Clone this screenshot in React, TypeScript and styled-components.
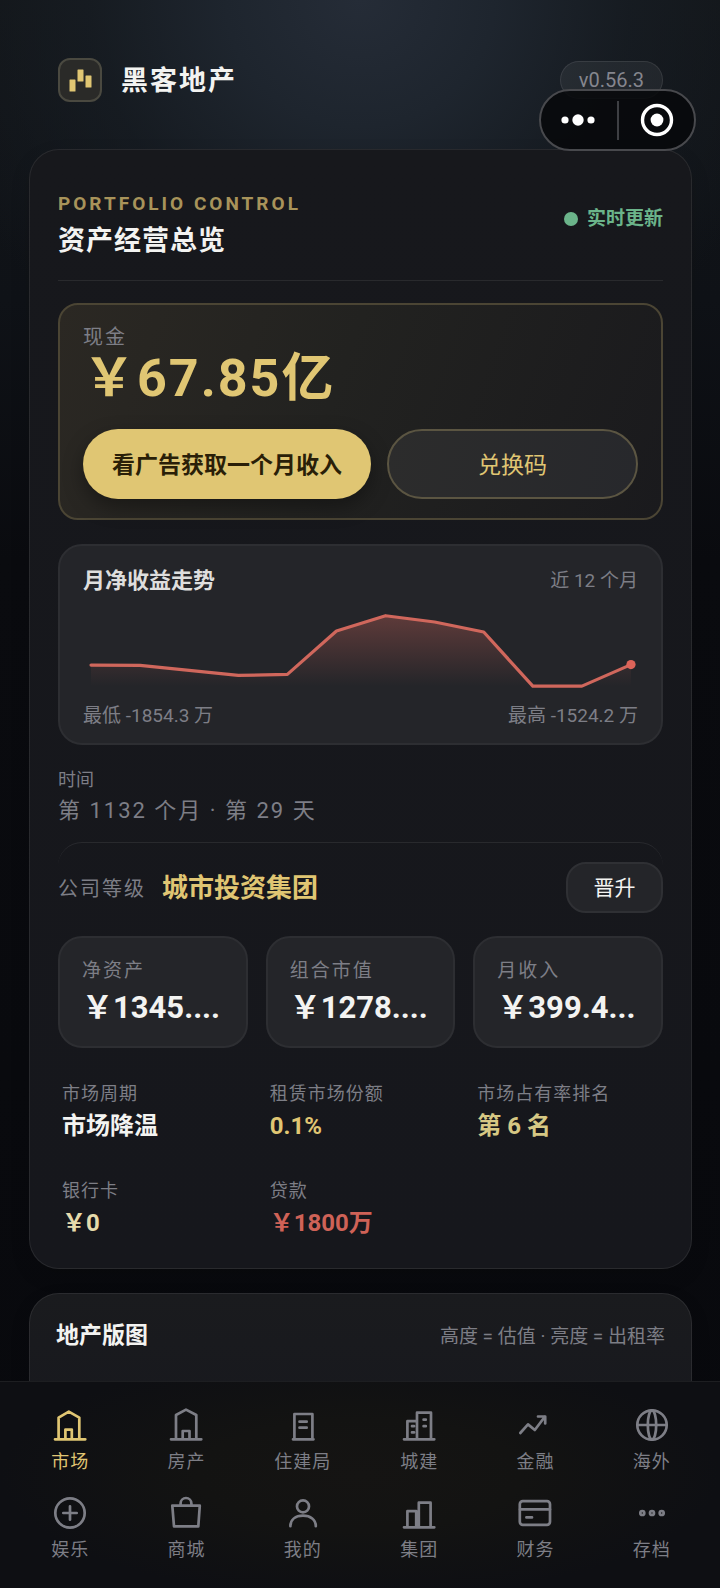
import React from 'react';
import styled, { createGlobalStyle, css } from 'styled-components';

const gold = '#e0c673';
const muted = '#7d7e86';
const line = 'rgba(255, 255, 255, 0.08)';

const GlobalStyle = createGlobalStyle`
  *, *::before, *::after { box-sizing: border-box; }
  body {
    margin: 0;
    background: #08090c;
    color: #f3f3f1;
    font-family: Roboto, "Noto Sans CJK SC", sans-serif;
    -webkit-font-smoothing: antialiased;
  }
  h1, h2, h3, p, dl, dt, dd, ul { margin: 0; padding: 0; }
  ul { list-style: none; }
  button { font-family: inherit; cursor: pointer; }
`;

const Shell = styled.div`
  position: relative;
  display: flex;
  flex-direction: column;
  height: 100vh;
  background:
    radial-gradient(ellipse 62% 420px at 50% 0, #252c37 0%, #1e252e 30%, rgba(24, 30, 37, 0.7) 60%, rgba(16, 19, 24, 0) 100%),
    linear-gradient(180deg, #121518 0, #0f1217 300px, #0a0b0f 560px, #08090d 100%);
`;

const Content = styled.main`
  flex: 1;
  min-height: 0;
  overflow-y: auto;
  scrollbar-width: none;
  padding: 0 28px 0 29px;
`;

const Header = styled.header`
  display: flex;
  align-items: center;
  padding: 58px 29px 47px;
`;

const Logo = styled.span`
  display: grid;
  place-items: center;
  width: 44px;
  height: 44px;
  border: 2px solid #4a4940;
  border-radius: 12px;
  background: #2a2a28;
`;

const Brand = styled.h1`
  margin-left: 19px;
  padding-top: 2px;
  font-size: 27px;
  line-height: 40px;
  font-weight: 700;
  letter-spacing: 2px;
`;

const Version = styled.span`
  margin-left: auto;
  padding: 0 18px;
  border: 1px solid rgba(255, 255, 255, 0.09);
  border-radius: 19px;
  background: rgba(255, 255, 255, 0.06);
  color: #85868e;
  font-size: 20px;
  line-height: 36px;
`;

const Capsule = styled.div`
  position: absolute;
  top: 89px;
  right: 24px;
  display: flex;
  align-items: center;
  width: 157px;
  height: 62px;
  border: 2px solid #48494d;
  border-radius: 31px;
  background: rgba(7, 8, 11, 0.86);
`;

const CapsuleButton = styled.button`
  flex: 1;
  display: grid;
  place-items: center;
  height: 100%;
  padding: 0;
  border: 0;
  background: none;
`;

const CapsuleDivider = styled.span`
  width: 2px;
  height: 39px;
  margin: 0 2px;
  background: #3e3f43;
`;

const Card = styled.section`
  border: 1px solid ${line};
  border-radius: 30px;
  background: linear-gradient(180deg, #17181c, #16171c);
  box-shadow: 0 8px 20px rgba(0, 0, 0, 0.12);
`;

const OverviewCard = styled(Card)`
  padding: 28px 28px 26px;
`;

const OverviewHead = styled.div`
  display: flex;
  justify-content: space-between;
  align-items: center;
  padding-bottom: 20px;
  border-bottom: 1px solid ${line};
`;

const Eyebrow = styled.p`
  margin-top: 14px;
  color: #a8935a;
  font-size: 19px;
  line-height: 24px;
  font-weight: 700;
  letter-spacing: 3px;
`;

const OverviewTitle = styled.h2`
  margin-top: 6px;
  font-size: 27px;
  line-height: 38px;
  font-weight: 700;
  letter-spacing: 1px;
`;

const Live = styled.span`
  display: flex;
  align-items: center;
  gap: 9px;
  color: #6bb48a;
  font-size: 19px;
  line-height: 28px;
  font-weight: 700;
  &::before {
    content: '';
    width: 14px;
    height: 14px;
    border-radius: 50%;
    background: currentColor;
  }
`;

const CashCard = styled.div`
  margin-top: 22px;
  padding: 20px 23px 19px;
  border: 2px solid #4b4534;
  border-radius: 20px;
  background: linear-gradient(110deg, #2b2823 0%, #222220 45%, #1a1a1d 100%);
`;

const CashLabel = styled.p`
  color: ${muted};
  font-size: 20px;
  line-height: 24px;
  letter-spacing: 2px;
`;

const CashValue = styled.p`
  color: ${gold};
  font-size: 52px;
  line-height: 60px;
  font-weight: 700;
  letter-spacing: 2px;
`;

const CashActions = styled.div`
  display: grid;
  grid-template-columns: 288fr 251fr;
  gap: 16px;
  margin-top: 20px;
`;

const PillButton = styled.button<{ $primary?: boolean }>`
  height: 70px;
  padding: 0 0 3px;
  border-radius: 35px;
  font-size: 23px;
  white-space: nowrap;
  ${({ $primary }) =>
    $primary
      ? css`
          border: 0;
          background: ${gold};
          color: #2a1f08;
          font-weight: 700;
          box-shadow: 0 8px 20px rgba(0, 0, 0, 0.35);
        `
      : css`
          border: 2px solid #5b5542;
          background: linear-gradient(100deg, #2c2c2c, #27282c);
          color: ${gold};
          font-weight: 400;
        `}
`;

const TrendCard = styled.figure`
  margin: 24px 0 0;
  padding: 20px 23px 14px;
  border: 2px solid #2d2e32;
  border-radius: 24px;
  background: #242529;
`;

const SplitRow = styled.div`
  display: flex;
  justify-content: space-between;
  align-items: center;
  color: ${muted};
  font-size: 19px;
  line-height: 26px;
`;

const TrendTitle = styled.h3`
  color: #dededd;
  font-size: 22px;
  line-height: 30px;
  font-weight: 700;
`;

const TrendSvg = styled.svg`
  display: block;
  width: 100%;
  height: auto;
  margin: 10px 0 9px;
`;

const TimeBlock = styled.div`
  margin-top: 22px;
  color: ${muted};
`;

const TimeLabel = styled.p`
  font-size: 18px;
  line-height: 26px;
`;

const TimeValue = styled.p`
  margin-top: 1px;
  font-size: 22px;
  line-height: 34px;
  letter-spacing: 2px;
`;

const LevelRow = styled.div`
  display: flex;
  align-items: center;
  margin-top: 14px;
  padding-top: 19px;
  border-top: 1px solid ${line};
  border-radius: 24px 24px 0 0;
`;

const LevelLabel = styled.span`
  color: ${muted};
  font-size: 20px;
  letter-spacing: 2px;
`;

const LevelName = styled.strong`
  margin-left: 16px;
  color: ${gold};
  font-size: 26px;
  line-height: 36px;
  font-weight: 700;
`;

const PromoteButton = styled.button`
  width: 97px;
  height: 51px;
  margin-left: auto;
  padding: 0 0 3px;
  border: 2px solid #2f3034;
  border-radius: 20px;
  background: #242529;
  color: #f3f3f1;
  font-size: 21px;
`;

const Grid = styled.dl<{ $top: number }>`
  display: grid;
  grid-template-columns: repeat(3, minmax(0, 1fr));
  gap: 18px;
  margin-top: ${({ $top }) => $top}px;
`;

const Stat = styled.div`
  height: 112px;
  padding: 18px 12px 0 22px;
  border: 2px solid #2d2e32;
  border-radius: 24px;
  background: #242529;
  white-space: nowrap;
  overflow: hidden;
`;

const StatLabel = styled.dt`
  color: ${muted};
  font-size: 19px;
  line-height: 30px;
  letter-spacing: 2px;
`;

const StatValue = styled.dd`
  font-size: 31px;
  line-height: 44px;
  font-weight: 700;
`;

const Metric = styled.div`
  padding: 15px 4px 0;
  white-space: nowrap;
`;

const MetricLabel = styled.dt`
  color: ${muted};
  font-size: 18px;
  line-height: 26px;
  letter-spacing: 1px;
`;

const MetricValue = styled.dd<{ $color: string }>`
  color: ${({ $color }) => $color};
  font-size: 24px;
  line-height: 38px;
  font-weight: 700;
`;

const MapCard = styled(Card)`
  display: flex;
  justify-content: space-between;
  align-items: flex-start;
  min-height: 320px;
  margin: 24px 0;
  padding: 25px 26px 0;
  background: linear-gradient(180deg, #1a1b1e 0, #18191e 100px);
`;

const MapTitle = styled.h2`
  font-size: 23px;
  line-height: 34px;
  font-weight: 700;
`;

const MapHint = styled.p`
  color: ${muted};
  font-size: 19px;
  line-height: 36px;
`;

const TabBar = styled.nav`
  padding: 23px 10px 26px 12px;
  border-top: 1px solid #1d1e21;
  background: radial-gradient(ellipse 50% 60% at 50% 45%, #151413 0%, #131312 45%, #0e0f13 100%);
`;

const TabList = styled.ul`
  display: grid;
  grid-template-columns: repeat(6, minmax(0, 1fr));
  gap: 19px 0;
`;

const Tab = styled.a<{ $active?: boolean }>`
  display: flex;
  flex-direction: column;
  align-items: center;
  gap: 5px;
  color: ${({ $active }) => ($active ? gold : muted)};
  font-size: 18px;
  line-height: 24px;
  letter-spacing: 1px;
  text-decoration: none;
`;

const TabIcon = styled.svg`
  width: 40px;
  height: 40px;
  fill: none;
  stroke: currentColor;
  stroke-width: 2.7;
  stroke-linecap: round;
  stroke-linejoin: round;
`;

const trend = [59, 59.3, 64.3, 69.3, 68.3, 25, 9.7, 16, 26, 80, 80, 58.5];
const trendPoints = trend.map((y, i) => `${8 + i * 49},${y}`).join(' ');

const stats = [
  { label: '净资产', value: '￥1345....' },
  { label: '组合市值', value: '￥1278....' },
  { label: '月收入', value: '￥399.4...' },
];

const metrics = [
  { label: '市场周期', value: '市场降温', color: '#f3f3f1' },
  { label: '租赁市场份额', value: '0.1%', color: gold },
  { label: '市场占有率排名', value: '第 6 名', color: '#d6c884' },
  { label: '银行卡', value: '￥0', color: '#e6dbac' },
  { label: '贷款', value: '￥1800万', color: '#cf6257' },
];

const tabs: { label: string; icon: React.ReactNode }[] = [
  {
    label: '市场',
    icon: <path d="M5 34.3H35.3M8.6 34V12.6L18.8 6.6L29.3 12.6V34M15.4 34V24.6H21.8V34" />,
  },
  {
    label: '房产',
    icon: <path d="M5 34.3H35.3M10 34V10L20 4.6L30.3 10V34M16.7 34V26H23.5V34" />,
  },
  {
    label: '住建局',
    icon: <path d="M10 34.3H30.5M11.4 34V9H29.4V34M16.5 16.7H23.7M16.5 22.7H23.7" />,
  },
  {
    label: '城建',
    icon: (
      <path d="M5 34.3H35.3M8.4 34V16.2H18M18 34V7.7H32V34M13 21.2H15M13 27.4H15M24.6 14.7H26.8M24.6 21.2H26.8" />
    ),
  },
  {
    label: '金融',
    icon: <path d="M5.3 28L13 19.4L19.8 25L30 11.5M23 11.5H30.2V18.5" />,
  },
  {
    label: '海外',
    icon: (
      <>
        <circle cx="20" cy="20" r="14.7" />
        <ellipse cx="20" cy="20" rx="4.2" ry="14.7" />
        <path d="M5.3 20H34.7" />
      </>
    ),
  },
  {
    label: '娱乐',
    icon: (
      <>
        <circle cx="20" cy="20" r="14.7" />
        <path d="M13.3 20H26.7M20 13.3V26.7" />
      </>
    ),
  },
  {
    label: '商城',
    icon: <path d="M6.3 12.7H33.8L32.3 33.4H8L6.3 12.7ZM14.6 12.4V10.4A5.4 5.4 0 0 1 25.4 10.4V12.4" />,
  },
  {
    label: '我的',
    icon: (
      <>
        <circle cx="20" cy="13.4" r="6" />
        <path d="M7.4 33.2C7.4 26.5 12.5 22.7 20 22.7S32.8 26.5 32.8 33.2" />
      </>
    ),
  },
  {
    label: '集团',
    icon: <path d="M5 34.3H35.3M8.4 34V18.2H17.2V34M19.8 34V9.7H31.6V34" />,
  },
  {
    label: '财务',
    icon: (
      <>
        <rect x="4.8" y="8.2" width="30.2" height="23.6" rx="3" />
        <path d="M5 16.4H35M11.4 24.4H17" />
      </>
    ),
  },
  {
    label: '存档',
    icon: (
      <>
        <circle cx="10.3" cy="20" r="2" />
        <circle cx="20" cy="20" r="2" />
        <circle cx="29.7" cy="20" r="2" />
      </>
    ),
  },
];

export default function App() {
  return (
    <>
      <GlobalStyle />
      <Shell>
        <Content>
          <Header>
            <Logo>
              <svg width="23" height="23" viewBox="0 0 23 23" fill={gold} aria-hidden="true">
                <rect x="0.5" y="10.5" width="6" height="12" rx="0.6" />
                <rect x="8.5" y="0.5" width="6" height="12" rx="0.6" />
                <rect x="16.5" y="6.5" width="6" height="12" rx="0.6" />
              </svg>
            </Logo>
            <Brand>黑客地产</Brand>
            <Version>v0.56.3</Version>
          </Header>

          <OverviewCard>
            <OverviewHead>
              <div>
                <Eyebrow>PORTFOLIO CONTROL</Eyebrow>
                <OverviewTitle>资产经营总览</OverviewTitle>
              </div>
              <Live>实时更新</Live>
            </OverviewHead>

            <CashCard>
              <CashLabel>现金</CashLabel>
              <CashValue>￥67.85亿</CashValue>
              <CashActions>
                <PillButton $primary type="button">看广告获取一个月收入</PillButton>
                <PillButton type="button">兑换码</PillButton>
              </CashActions>
            </CashCard>

            <TrendCard>
              <SplitRow>
                <TrendTitle>月净收益走势</TrendTitle>
                <span>近 12 个月</span>
              </SplitRow>
              <TrendSvg viewBox="0 0 554 88" role="img" aria-label="月净收益走势">
                <defs>
                  <linearGradient id="trendFill" x1="0" y1="0" x2="0" y2="1">
                    <stop offset="0" stopColor="#d0655b" stopOpacity="0.34" />
                    <stop offset="1" stopColor="#d0655b" stopOpacity="0" />
                  </linearGradient>
                </defs>
                <polygon points={`8,80 ${trendPoints} 547,80`} fill="url(#trendFill)" />
                <polyline
                  points={trendPoints}
                  fill="none"
                  stroke="#d0675c"
                  strokeWidth="3.2"
                  strokeLinejoin="round"
                  strokeLinecap="round"
                />
                <circle cx="547" cy="58.5" r="4.6" fill="#dd6459" />
              </TrendSvg>
              <SplitRow>
                <span>最低 -1854.3 万</span>
                <span>最高 -1524.2 万</span>
              </SplitRow>
            </TrendCard>

            <TimeBlock>
              <TimeLabel>时间</TimeLabel>
              <TimeValue>第 1132 个月 · 第 29 天</TimeValue>
            </TimeBlock>

            <LevelRow>
              <LevelLabel>公司等级</LevelLabel>
              <LevelName>城市投资集团</LevelName>
              <PromoteButton type="button">晋升</PromoteButton>
            </LevelRow>

            <Grid $top={23}>
              {stats.map((s) => (
                <Stat key={s.label}>
                  <StatLabel>{s.label}</StatLabel>
                  <StatValue>{s.value}</StatValue>
                </Stat>
              ))}
            </Grid>

            <Grid $top={18}>
              {metrics.map((m) => (
                <Metric key={m.label}>
                  <MetricLabel>{m.label}</MetricLabel>
                  <MetricValue $color={m.color}>{m.value}</MetricValue>
                </Metric>
              ))}
            </Grid>
          </OverviewCard>

          <MapCard>
            <MapTitle>地产版图</MapTitle>
            <MapHint>高度 = 估值 · 亮度 = 出租率</MapHint>
          </MapCard>
        </Content>

        <TabBar>
          <TabList>
            {tabs.map((t, i) => (
              <li key={t.label}>
                <Tab href="#" $active={i === 0}>
                  <TabIcon viewBox="0 0 40 40" aria-hidden="true">{t.icon}</TabIcon>
                  {t.label}
                </Tab>
              </li>
            ))}
          </TabList>
        </TabBar>

        <Capsule>
          <CapsuleButton type="button" aria-label="更多">
            <svg width="34" height="12" viewBox="0 0 34 12" fill="#fff">
              <circle cx="4" cy="6" r="3.6" />
              <circle cx="17" cy="6" r="5.7" />
              <circle cx="30" cy="6" r="3.6" />
            </svg>
          </CapsuleButton>
          <CapsuleDivider />
          <CapsuleButton type="button" aria-label="关闭">
            <svg width="34" height="34" viewBox="0 0 34 34">
              <circle cx="17" cy="17" r="14.5" fill="none" stroke="#fff" strokeWidth="3.4" />
              <circle cx="17" cy="17" r="6.4" fill="#fff" />
            </svg>
          </CapsuleButton>
        </Capsule>
      </Shell>
    </>
  );
}
